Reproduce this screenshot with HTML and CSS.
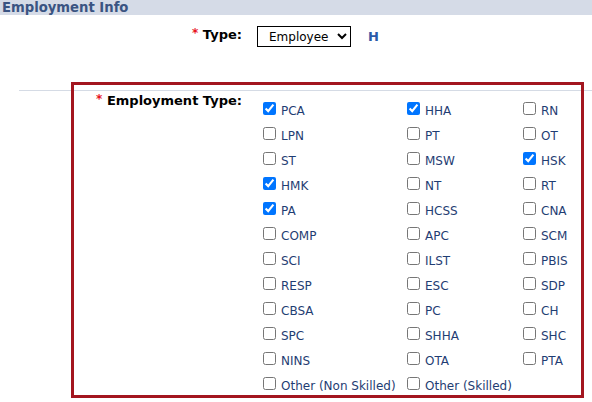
FILE: index.html
```html
<!DOCTYPE html>
<html>
<head>
<meta charset="utf-8">
<link rel="stylesheet" href="styles.css">
</head>
<body>
<div class="section-title">Employment Info</div>

<div class="type-row">
  <div class="field-label"><span class="req">*</span> Type:</div>
  <div class="type-control">
    <select class="type-select">
      <option>Employee</option>
    </select>
    <span class="type-code">H</span>
  </div>
</div>

<div class="emp-section">
  <div class="highlight-box">
    <div class="field-label emp-label"><span class="req">*</span> Employment Type:</div>
    <div class="check-grid">
      <label class="check"><input type="checkbox" checked>PCA</label>
      <label class="check"><input type="checkbox" checked>HHA</label>
      <label class="check"><input type="checkbox">RN</label>

      <label class="check"><input type="checkbox">LPN</label>
      <label class="check"><input type="checkbox">PT</label>
      <label class="check"><input type="checkbox">OT</label>

      <label class="check"><input type="checkbox">ST</label>
      <label class="check"><input type="checkbox">MSW</label>
      <label class="check"><input type="checkbox" checked>HSK</label>

      <label class="check"><input type="checkbox" checked>HMK</label>
      <label class="check"><input type="checkbox">NT</label>
      <label class="check"><input type="checkbox">RT</label>

      <label class="check"><input type="checkbox" checked>PA</label>
      <label class="check"><input type="checkbox">HCSS</label>
      <label class="check"><input type="checkbox">CNA</label>

      <label class="check"><input type="checkbox">COMP</label>
      <label class="check"><input type="checkbox">APC</label>
      <label class="check"><input type="checkbox">SCM</label>

      <label class="check"><input type="checkbox">SCI</label>
      <label class="check"><input type="checkbox">ILST</label>
      <label class="check"><input type="checkbox">PBIS</label>

      <label class="check"><input type="checkbox">RESP</label>
      <label class="check"><input type="checkbox">ESC</label>
      <label class="check"><input type="checkbox">SDP</label>

      <label class="check"><input type="checkbox">CBSA</label>
      <label class="check"><input type="checkbox">PC</label>
      <label class="check"><input type="checkbox">CH</label>

      <label class="check"><input type="checkbox">SPC</label>
      <label class="check"><input type="checkbox">SHHA</label>
      <label class="check"><input type="checkbox">SHC</label>

      <label class="check"><input type="checkbox">NINS</label>
      <label class="check"><input type="checkbox">OTA</label>
      <label class="check"><input type="checkbox">PTA</label>

      <label class="check"><input type="checkbox">Other (Non Skilled)</label>
      <label class="check"><input type="checkbox">Other (Skilled)</label>
    </div>
  </div>
</div>
</body>
</html>
```

FILE: styles.css
```css
html, body {
  margin: 0;
  padding: 0;
  background: #ffffff;
}

body {
  font-family: "DejaVu Sans", Verdana, sans-serif;
  font-size: 12px;
  color: #000;
}

.section-title {
  height: 15px;
  line-height: 15px;
  background: #d5dbe7;
  color: #3a5482;
  font-weight: bold;
  font-size: 13.2px;
  padding-left: 2px;
  white-space: nowrap;
}

.type-row {
  display: flex;
  align-items: flex-start;
  margin-top: 11px;
}

.field-label {
  width: 242px;
  flex: none;
  text-align: right;
  font-weight: bold;
  font-size: 13px;
  line-height: 16px;
  color: #000;
  white-space: nowrap;
}

.type-row .field-label {
  padding-top: 1px;
}

.req {
  color: #e8141e;
  font-size: 12px;
  position: relative;
  top: -2px;
}

.type-control {
  display: flex;
  align-items: center;
  margin-left: 15px;
}

.type-select {
  font-family: "DejaVu Sans", Verdana, sans-serif;
  font-size: 12px;
  width: 94px;
  height: 21px;
  border: 1px solid #000;
  border-radius: 0;
  background: #fff;
  color: #000;
  padding: 0 0 0 7px;
  margin: 0;
}

.type-code {
  margin-left: 17px;
  font-weight: bold;
  font-size: 13px;
  color: #2b5aa8;
}

.emp-section {
  margin-top: 43px;
  margin-left: 19px;
  border-top: 1px solid #d5dbe5;
}

.highlight-box {
  margin-top: -9px;
  margin-left: 52px;
  width: 507px;
  height: 310px;
  border: 3px solid #a3161f;
  display: flex;
  align-items: flex-start;
}

.emp-label {
  width: 168px;
  padding-top: 8px;
}

.check-grid {
  margin-left: 21px;
  padding-top: 16px;
  display: grid;
  grid-template-columns: 144px 116px 1fr;
  grid-auto-rows: 20px;
  row-gap: 5px;
  flex: 1;
}

.check {
  display: block;
  line-height: 20px;
  color: #1f3d73;
  font-size: 12px;
  white-space: nowrap;
}

.check input {
  margin: 0 5px 0 0;
  width: 13px;
  height: 13px;
  vertical-align: baseline;
}
```
